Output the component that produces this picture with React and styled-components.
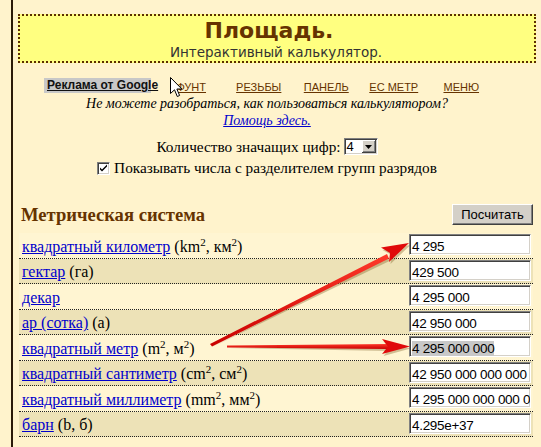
import React from "react";
import styled, { createGlobalStyle } from "styled-components";

const GlobalStyle = createGlobalStyle`
  html, body {
    margin: 0;
    padding: 0;
    background: #fff3cc;
  }
  body {
    font-family: "Liberation Serif", "Times New Roman", serif;
    color: #000;
  }
`;

const UNITS = [
  { name: "квадратный километр", sym: ["km", "км"], value: "4 295" },
  { name: "гектар", plain: "(га)", value: "429 500" },
  { name: "декар", value: "4 295 000" },
  { name: "ар (сотка)", plain: "(a)", value: "42 950 000" },
  { name: "квадратный метр", sym: ["m", "м"], value: "4 295 000 000", selected: true },
  { name: "квадратный сантиметр", sym: ["cm", "см"], value: "42 950 000 000 000" },
  { name: "квадратный миллиметр", sym: ["mm", "мм"], value: "4 295 000 000 000 000" },
  { name: "барн", plain: "(b, б)", value: "4.295e+37" },
];

const NAV = ["ФУНТ", "РЕЗЬБЫ", "ПАНЕЛЬ", "ЕС МЕТР", "МЕНЮ"];

const App = () => {
  return (
    <Screen>
      <GlobalStyle />
      <Page>
        <Header>
          <Title>Площадь.</Title>
          <Subtitle>Интерактивный калькулятор.</Subtitle>
        </Header>

        <Nav>
          <AdLabel>Реклама от Google</AdLabel>
          {NAV.map((item) => (
            <NavCell key={item}>
              <NavLink href="#">{item}</NavLink>
            </NavCell>
          ))}
        </Nav>

        <Centered>
          <HelpText>Не можете разобраться, как пользоваться калькулятором?</HelpText>
          <HelpLink href="#">Помощь здесь.</HelpLink>
        </Centered>

        <Settings>
          <SettingLine>
            Количество значащих цифр:
            <FakeSelect>
              <SelectValue>4</SelectValue>
              <DropButton>
                <svg width="7" height="4" viewBox="0 0 7 4">
                  <path d="M0 0h7L3.5 4z" fill="#000" />
                </svg>
              </DropButton>
            </FakeSelect>
          </SettingLine>
          <SettingLine>
            <CheckBox>
              <svg width="9" height="9" viewBox="0 0 9 9">
                <path d="M1 3.5l2 2 5-5v2l-5 5-2-2z" fill="#000" />
              </svg>
            </CheckBox>
            Показывать числа с разделителем групп разрядов
          </SettingLine>
        </Settings>

        <SectionHead>
          <SectionTitle>Метрическая система</SectionTitle>
          <CalcButton>Посчитать</CalcButton>
        </SectionHead>

        <UnitTable>
          {UNITS.map((u, i) => (
            <UnitRow key={u.name} $shaded={i % 2 === 1}>
              <UnitLabel>
                <UnitLink href="#">{u.name}</UnitLink>
                {u.sym && (
                  <>
                    {" ("}
                    {u.sym[0]}
                    <sup>2</sup>, {u.sym[1]}
                    <sup>2</sup>)
                  </>
                )}
                {u.plain && ` ${u.plain}`}
              </UnitLabel>
              <Field>
                <FieldText $selected={u.selected}>{u.value}</FieldText>
              </Field>
            </UnitRow>
          ))}
        </UnitTable>
      </Page>

      <Overlay width="541" height="447" viewBox="0 0 541 447">
        <defs>
          <linearGradient id="redShade" x1="0" y1="0" x2="0" y2="1">
            <stop offset="0" stopColor="#ff3a2a" />
            <stop offset="1" stopColor="#c80000" />
          </linearGradient>
        </defs>
        <g opacity="0.35" transform="translate(1.5 2)">
          <path d="M211 345 L386 255 L388 259 Z" fill="#7a5a20" />
          <path d="M409 243 L381 248 L390 253 L389 262 Z" fill="#7a5a20" />
          <path d="M228 346 L388 344 L388 349 Z" fill="#7a5a20" />
          <path d="M409 346.5 L382 339 L388 346.5 L382 354 Z" fill="#7a5a20" />
        </g>
        <path d="M210 344 L387 254 L389 258.5 L212 346.5 Z" fill="url(#redShade)" />
        <path d="M409 243 L381 247.5 L390 253 L389 262 Z" fill="#e00a0a" />
        <path d="M227 345.5 L388 344 L388 349 L227 347.5 Z" fill="url(#redShade)" />
        <path d="M410 346.5 L382 339 L388 346.5 L382 354 Z" fill="#e00a0a" />
      </Overlay>

      <Cursor width="13" height="21" viewBox="0 0 13 21">
        <path
          d="M0.5 0.5 L0.5 16.5 L4.5 12.8 L7.3 19.5 L9.6 18.5 L6.9 12 L11.8 12 Z"
          fill="#fff"
          stroke="#000"
          strokeWidth="1"
          strokeLinejoin="miter"
        />
      </Cursor>
    </Screen>
  );
};

const Screen = styled.div`
  position: relative;
  width: 541px;
  min-height: 447px;
  overflow: hidden;
`;

const Page = styled.div`
  margin-left: 11px;
  border-left: 2px solid #2a1a08;
  min-height: 447px;
  padding-top: 14px;
  box-sizing: border-box;
`;

const Header = styled.div`
  margin: 0 5px 0 5px;
  height: 49px;
  box-sizing: border-box;
  border: 2px dotted #5c2e00;
  background: #ffff80;
  text-align: center;
  padding: 2px 16px 0 0;
`;

const Title = styled.div`
  font-family: "DejaVu Sans", Verdana, sans-serif;
  font-weight: bold;
  font-size: 22px;
  line-height: 26px;
  color: #663300;
`;

const Subtitle = styled.div`
  font-family: "DejaVu Sans", Verdana, sans-serif;
  font-size: 13.5px;
  line-height: 17px;
  color: #333;
  padding-left: 14px;
`;

const Nav = styled.div`
  display: flex;
  align-items: center;
  margin-top: 15px;
  padding-left: 31px;
  height: 15px;
`;

const AdLabel = styled.span`
  font-family: "Liberation Sans", Arial, sans-serif;
  font-weight: bold;
  font-size: 12px;
  line-height: 15px;
  background: #c8c8c8;
  color: #111;
  padding: 0 3px;
  width: 107px;
  box-sizing: border-box;
  white-space: nowrap;
  text-decoration: underline;
  margin-right: 6.5px;
`;

const NavCell = styled.span`
  width: 67.5px;
  text-align: center;
`;

const NavLink = styled.a`
  font-family: "Liberation Sans", Arial, sans-serif;
  font-size: 11px;
  color: #663300;
  text-decoration: underline;
`;

const Centered = styled.div`
  display: flex;
  flex-direction: column;
  align-items: center;
  margin-right: 20px;
  margin-top: 2px;
`;

const HelpText = styled.span`
  font-style: italic;
  font-size: 14px;
  line-height: 17px;
`;

const HelpLink = styled.a`
  font-style: italic;
  font-size: 14px;
  line-height: 17px;
  color: #0000cc;
  text-decoration: underline;
`;

const Settings = styled.div`
  display: flex;
  flex-direction: column;
  align-items: center;
  margin-right: 20px;
  margin-top: 9px;
  gap: 3px;
`;

const SettingLine = styled.div`
  display: flex;
  align-items: center;
  gap: 3px;
  font-size: 15.3px;
  line-height: 18px;
`;

const FakeSelect = styled.span`
  display: inline-flex;
  align-items: stretch;
  height: 17px;
  width: 34px;
  box-sizing: border-box;
  border-top: 1px solid #808080;
  border-left: 1px solid #808080;
  border-right: 1px solid #fff;
  border-bottom: 1px solid #fff;
  box-shadow: inset 1px 1px #404040, inset -1px -1px #d4d0c8;
  background: #fff;
  padding: 1px;
  margin-bottom: 1px;
`;

const SelectValue = styled.span`
  flex: 1;
  font-family: "Liberation Sans", Arial, sans-serif;
  font-size: 13px;
  line-height: 13px;
  padding-left: 1px;
`;

const DropButton = styled.span`
  width: 14px;
  display: flex;
  align-items: center;
  justify-content: center;
  background: #d4d0c8;
  box-shadow: inset -1px -1px #404040, inset 1px 1px #fff, inset -2px -2px #808080;
`;

const CheckBox = styled.span`
  display: inline-flex;
  align-items: center;
  justify-content: center;
  width: 13px;
  height: 13px;
  box-sizing: border-box;
  background: #fff;
  border-top: 1px solid #808080;
  border-left: 1px solid #808080;
  border-right: 1px solid #fff;
  border-bottom: 1px solid #fff;
  box-shadow: inset 1px 1px #404040, inset -1px -1px #d4d0c8;
  margin-right: 1px;
`;

const SectionHead = styled.div`
  display: flex;
  align-items: center;
  justify-content: space-between;
  margin: 26px 8px 0 8px;
  height: 22px;
`;

const SectionTitle = styled.div`
  font-weight: bold;
  font-size: 18.6px;
  color: #663300;
  padding-top: 2px;
`;

const CalcButton = styled.button`
  width: 81px;
  height: 21px;
  font-family: "Liberation Sans", Arial, sans-serif;
  font-size: 13px;
  color: #000;
  background: #d4d0c8;
  border: 1px solid;
  border-color: #fff #404040 #404040 #fff;
  box-shadow: inset -1px -1px #808080;
  padding: 0;
`;

const UnitTable = styled.div`
  margin: 8px 8px 0 6px;
  display: flex;
  flex-direction: column;
`;

const UnitRow = styled.div`
  display: flex;
  align-items: center;
  justify-content: space-between;
  height: 25.5px;
  box-sizing: border-box;
  border-bottom: 1px dotted #222;
  background: ${(p) => (p.$shaded ? "#ede2b7" : "#fff5d2")};
  padding: 0 2px 0 3px;
`;

const UnitLabel = styled.div`
  font-size: 16px;
  line-height: 18px;
  white-space: nowrap;
  padding-top: 3px;

  sup {
    font-size: 11px;
    line-height: 0;
  }
`;

const UnitLink = styled.a`
  color: #0000cc;
  text-decoration: underline;
`;

const Field = styled.div`
  width: 122px;
  height: 21px;
  box-sizing: border-box;
  background: #fff;
  border-top: 1px solid #808080;
  border-left: 1px solid #808080;
  border-right: 1px solid #fff;
  border-bottom: 1px solid #fff;
  box-shadow: inset 1px 1px #404040, inset -1px -1px #d4d0c8;
  padding: 2px 0 0 2px;
  overflow: hidden;
  white-space: nowrap;
  margin-bottom: 1px;
`;

const FieldText = styled.span`
  font-family: "Liberation Sans", Arial, sans-serif;
  font-size: 13.5px;
  line-height: 15px;
  letter-spacing: -0.3px;
  color: #000;
  background: ${(p) => (p.$selected ? "#c8c8c8" : "transparent")};
`;

const Overlay = styled.svg`
  position: absolute;
  left: 0;
  top: 0;
  pointer-events: none;
`;

const Cursor = styled.svg`
  position: absolute;
  left: 170px;
  top: 77px;
  pointer-events: none;
`;

export default App;
